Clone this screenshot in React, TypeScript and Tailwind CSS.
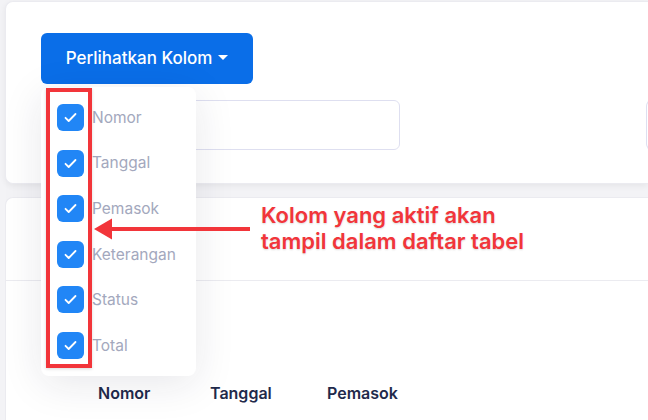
const columns = ["Nomor", "Tanggal", "Pemasok", "Keterangan", "Status", "Total"];

function CheckBox() {
  return (
    <span className="h-[27px] w-[27px] rounded-[6px] bg-[#2186f6] grid place-items-center shrink-0">
      <svg width="17" height="17" viewBox="0 0 17 17" fill="none">
        <path d="M3.5 8.8l3.2 3.2 6.8-7" stroke="white" strokeWidth="1.8" strokeLinecap="round" strokeLinejoin="round" />
      </svg>
    </span>
  );
}

export default function App() {
  return (
    <div className="relative w-[648px] h-[420px] overflow-hidden bg-[#f3f3f6] font-['Inter',sans-serif]">
      {/* filter card */}
      <div className="ml-[5px] mt-[1px] h-[183px] overflow-hidden rounded-l-lg border border-r-0 border-[#ebebf0] bg-white shadow-[0_2px_6px_rgba(0,0,0,0.06)] pl-[35px] pt-[31px]">
        <button className="h-[51px] w-[212px] rounded-md bg-[#0a6ee8] text-white text-[17px] font-medium flex items-center justify-center gap-[6px]">
          Perlihatkan Kolom
          <span className="inline-block w-0 h-0 border-l-[5px] border-r-[5px] border-t-[5px] border-l-transparent border-r-transparent border-t-white mb-[2px]" />
        </button>
        <div className="mt-[16px] grid w-max grid-cols-[359px_40px] gap-x-[246px]">
          <div className="h-[50px] rounded-md border border-[#dedff0] bg-white" />
          <div className="h-[50px] rounded-l-md border border-r-0 border-[#dedff0] bg-white" />
        </div>
      </div>

      {/* table card */}
      <div className="ml-[5px] mt-[13px] h-[240px] rounded-tl-lg border border-r-0 border-[#ebebf0] bg-white">
        <div className="h-[83px] border-b border-[#ebebf0]" />
        <div className="flex pt-[100px] text-[16px] font-semibold text-[#1f2a4b]">
          <span className="ml-[92px] w-[112px]">Nomor</span>
          <span className="w-[117px]">Tanggal</span>
          <span>Pemasok</span>
        </div>
      </div>

      {/* dropdown */}
      <div className="absolute left-[41px] top-[87px] w-[155px] h-[289px] rounded-lg bg-white shadow-[0_8px_40px_rgba(30,30,60,0.10)] pl-[16px] pt-[17px] flex flex-col gap-[18.6px]">
        {columns.map((c) => (
          <label key={c} className="flex items-center gap-[8px] h-[27px]">
            <CheckBox />
            <span className="text-[15.5px] text-[#a3a8bd]">{c}</span>
          </label>
        ))}
      </div>

      {/* annotation */}
      <div className="absolute left-[46px] top-[88px] w-[46px] h-[280px] border-[4px] border-[#f2353a] shadow-[0_1px_3px_rgba(0,0,0,0.15)]" />
      <svg className="absolute left-[92px] top-[215px]" width="162" height="28" viewBox="0 0 162 28">
        <path d="M18 14H158" stroke="#f2353a" strokeWidth="4" />
        <path d="M2 14L20 3.5V24.5Z" fill="#f2353a" />
      </svg>
      <div className="absolute left-[261px] top-[202px] text-[22px] leading-[26px] font-semibold text-[#f2353a] [text-shadow:0_1px_2px_rgba(0,0,0,0.15)]">
        Kolom yang aktif akan
        <br />
        tampil dalam daftar tabel
      </div>
    </div>
  );
}
